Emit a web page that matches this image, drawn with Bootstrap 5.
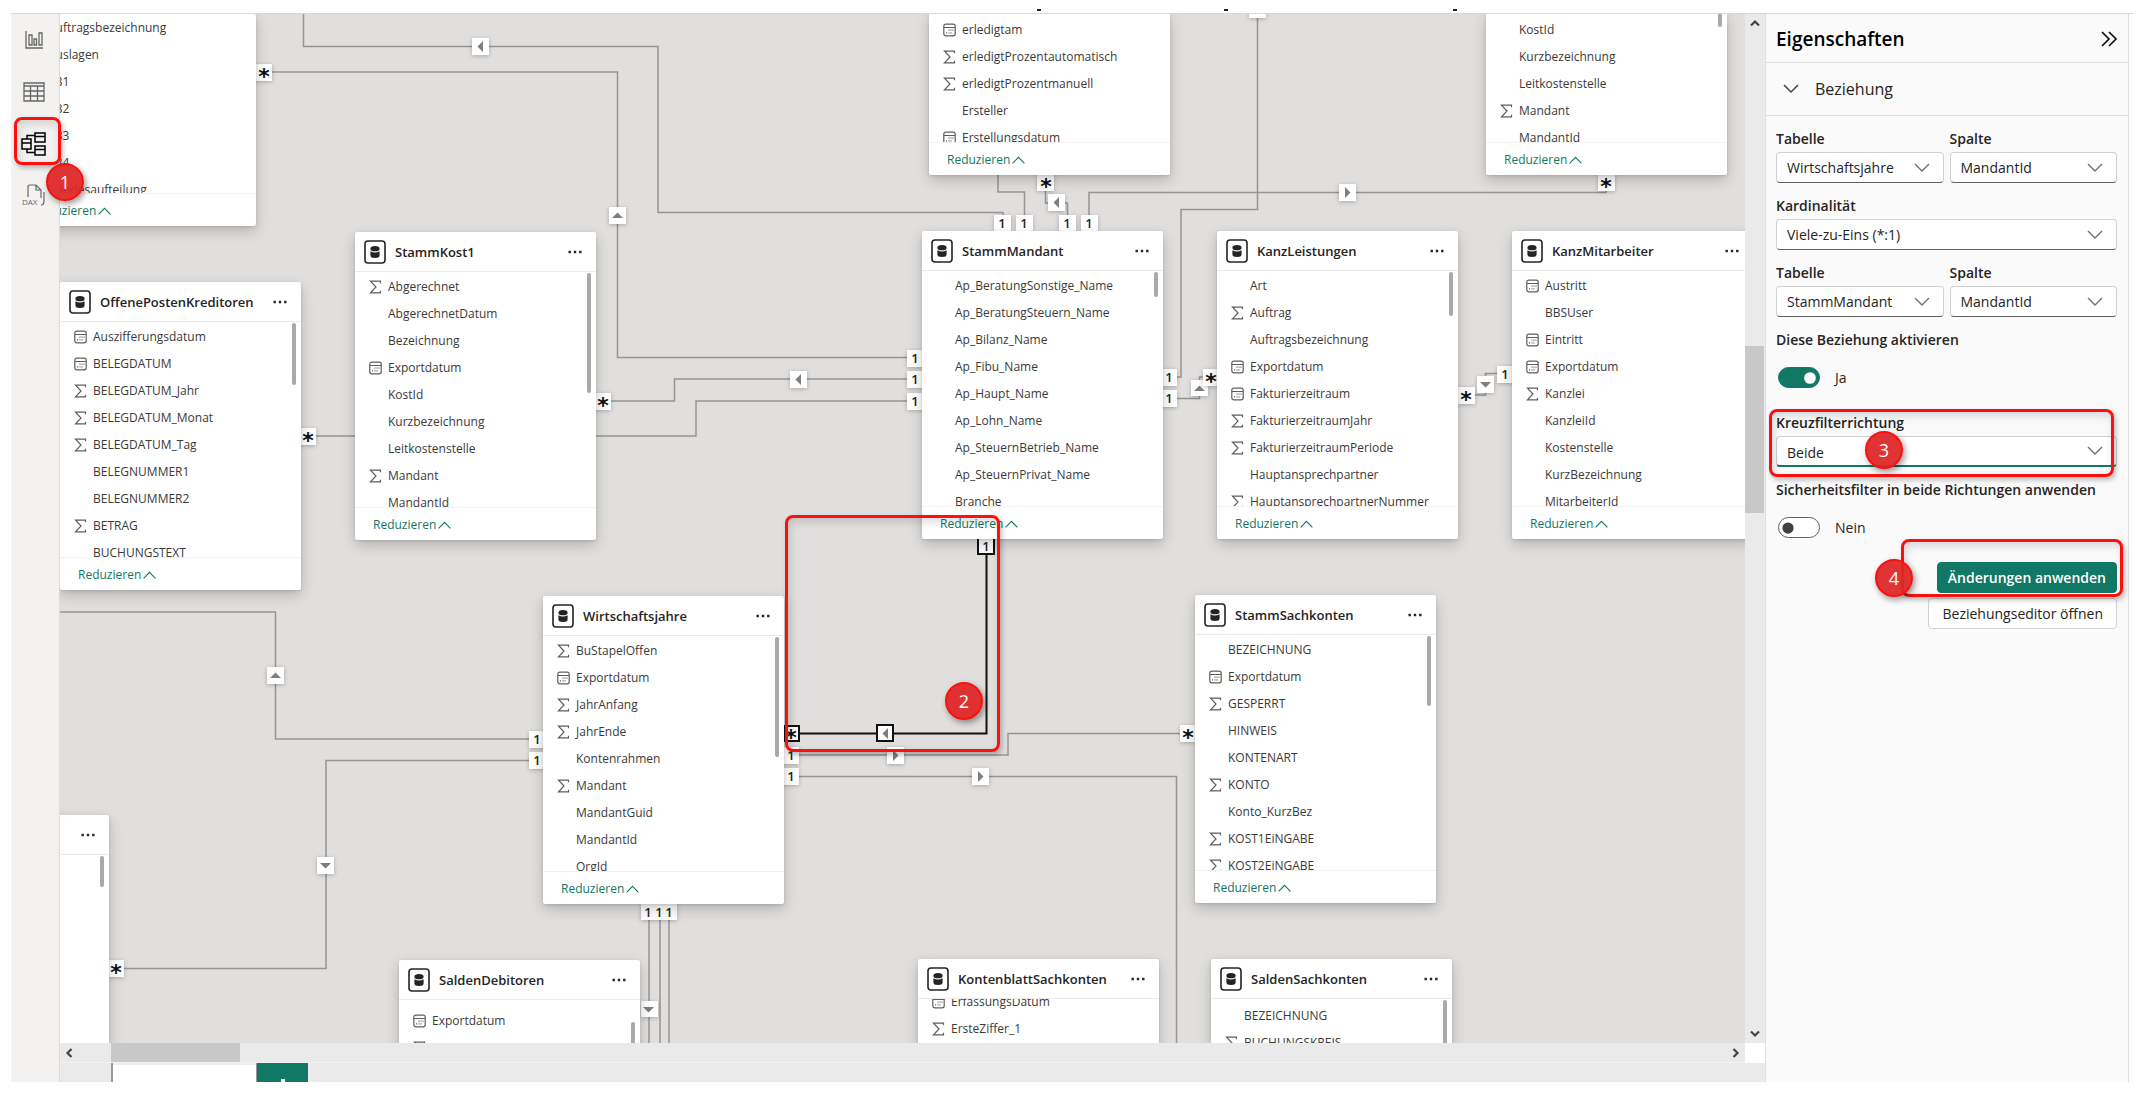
<!DOCTYPE html>
<html lang="de">
<head>
<meta charset="utf-8">
<meta name="viewport" content="width=device-width, initial-scale=1">
<title>Modellansicht</title>
<link href="https://cdn.jsdelivr.net/npm/bootstrap@5.3.0/dist/css/bootstrap.min.css" rel="stylesheet">
<style>
:root{--ink:#252423;--teal:#117865;--line:#e1dfdd;--red:#fb1010}
body{font-family:"Open Sans","Noto Sans",sans-serif;font-size:14px;color:var(--ink);background:#fff}
.app{height:100vh;padding:0 22px 27px 11px}
.topband{height:13px;flex:none;background:#fff}
.main{min-height:0;border-top:1px solid #d8d8d8;box-shadow:inset 0 3px 4px -2px rgba(0,0,0,.18)}
/* view switcher */
.views{width:49px;flex:none;background:#f3f2f1;border-right:1px solid #dcdad8}
.views button{height:52px;width:48px;padding:0 3px 1px 0;border:0;background:none;color:#666;position:relative;display:flex;align-items:center;justify-content:center}
.views button.current{color:#000}
/* canvas */
.canvas{position:relative;overflow:hidden;background:#e0dfdd}
.stage{position:absolute;left:-60px;top:-14px;width:2155px;height:1109px}
.links{position:absolute;left:0;top:0}
.links .wire{fill:none;stroke:#979593;stroke-width:1.5}
.links .pick{fill:none;stroke:#111;stroke-width:2}
.links .chip{fill:#fff;filter:drop-shadow(0 1px 2px rgba(0,0,0,.25))}
.links .chosen{fill:#fff;stroke:#111;stroke-width:2}
.links .tri{fill:#807e7c}
.links text{font-size:13px;font-weight:600;fill:#252423;text-anchor:middle}
.links text.many{font-family:"DejaVu Sans",sans-serif;font-size:22px;font-weight:700;fill:#111}
.node{position:absolute;width:241px;height:308px;background:#fff;border-radius:2px;box-shadow:0 5px 14px rgba(0,0,0,.2),0 1px 3px rgba(0,0,0,.12);display:flex;flex-direction:column}
.node header{height:40px;flex:none;display:flex;align-items:center;padding:0 14px 0 9px;border-bottom:1px solid #edebe9}
.node h2{font-size:13px;font-weight:600;line-height:20px;margin:0 auto 0 9px;white-space:nowrap}
.node .more{border:0;background:none;padding:0;line-height:0;color:var(--ink)}
.node .fields{flex:1;min-height:0;overflow:hidden}
.node ul{list-style:none;margin:0;padding:1px 0 0 14px}
.node li{height:27px;display:flex;align-items:center;font-size:12px;color:#3b3a39;white-space:nowrap}
.node li svg{width:13px;height:14px;margin-right:6px;flex:none;color:#605e5c}
.node li.plain{padding-left:19px}
.node footer{height:33px;flex:none;border-top:1px solid #f3f2f1;padding:1px 0 0 18px;display:flex;align-items:center}
.node footer a{font-size:12px;color:var(--teal);text-decoration:none;display:flex;align-items:center;gap:2px}
.node .thumb{position:absolute;right:5px;top:41px;width:4px;border-radius:2px;background:#a9a9a9}
.node .late{padding-top:7px}
.node .scrolled{margin-top:-12px}
.node .beneath{padding-top:3px}
.node .beneath1{padding-top:0}
/* scroll bars */
.vbar{width:20px;flex:none;background:#eaeaea;position:relative}
.hbar{height:20px;flex:none;background:#eaeaea;position:relative;border-bottom:1px solid #f2f2f2}
.corner{width:20px;height:20px;flex:none}
.knob{position:absolute;background:#c8c8c8}
.vbar .knob{left:0;right:1px;top:332px;height:167px}
.hbar .knob{left:51px;width:129px;top:0;bottom:0}
.tabs{height:19px;flex:none;background:#eaeaea}
.tabs .leaf{width:146px;margin-left:51px;border:1px solid #999;border-width:0 1px 0 2px;background:#fff;box-shadow:inset 0 2px #eee}
.tabs .plus{width:51px;border:0;border-radius:0;padding:0;background:var(--teal);color:#fff;overflow:hidden;line-height:0;display:flex;align-items:flex-end;justify-content:center}
/* properties pane */
.pane{width:364px;flex:none;background:#fafafa;border:1px solid var(--line);border-width:0 1px}
.edge{width:4px;flex:none;background:#fcfcfc}
.pane h1{font-size:19px;font-weight:600;margin:0;color:#000}
.pane .head{height:49px;padding:2px 10px 0;border-bottom:1px solid var(--line)}
.pane .sect{height:53px;padding:0 17px;border:0;border-bottom:1px solid var(--line);background:none;font-size:16px;width:100%;gap:16px;color:var(--ink)}
.pane form{padding:10px 11px 0 10px}
.pane label.cap,.pane .cap{height:26px;line-height:25px;font-size:14px;font-weight:600;display:block;margin:0;white-space:nowrap}
.pane .form-select{height:31px;padding:1px 36px 0 10px;font-size:14px;line-height:28px;color:var(--ink);border:1px solid #d1d1d1;border-bottom-color:#616161;border-radius:4px;background-color:#fff;background-size:16px 10px;background-position:right 13px center;background-image:url("data:image/svg+xml,%3Csvg xmlns='http://www.w3.org/2000/svg' viewBox='0 0 16 10'%3E%3Cpath d='M1 1l7 7 7-7' fill='none' stroke='%23707070' stroke-width='1.4'/%3E%3C/svg%3E")}
.pane .form-select.live{border-bottom:2px solid var(--teal);padding-top:2px}
.pane .grp{margin-bottom:10px;position:relative}
.pane .pair{gap:6px}
.pane .pair>div{flex:1 1 0;min-width:0}
.pane .form-switch{height:49px;padding:0 0 0 2px;margin:0;display:flex;align-items:center;gap:15px}
.pane .form-switch .form-check-input{width:42px;height:21px;margin:0;float:none;border:1px solid #616161;background-color:#fff;background-size:18px;background-image:url("data:image/svg+xml,%3Csvg xmlns='http://www.w3.org/2000/svg' viewBox='-4 -4 8 8'%3E%3Ccircle r='2.5' fill='%23424242'/%3E%3C/svg%3E")}
.pane .form-switch .form-check-input:checked{background-color:var(--teal);border-color:var(--teal);background-image:url("data:image/svg+xml,%3Csvg xmlns='http://www.w3.org/2000/svg' viewBox='-4 -4 8 8'%3E%3Ccircle r='2.6' fill='%23fff'/%3E%3C/svg%3E")}
.pane .btn{height:31px;padding:0 13px;font-size:14px;line-height:28px;border-radius:4px;color:var(--ink);background:#fff;border:1px solid #d1d1d1}
.pane .btn.go{background:var(--teal);border-color:var(--teal);color:#fff;font-weight:600;padding:0 10px}
.acts{position:relative;margin-top:10px;gap:5px}
/* numbered call-outs */
.ring{position:absolute;border:3px solid var(--red);border-radius:8px;box-shadow:2px 3px 5px rgba(0,0,0,.25),inset 2px 4px 8px rgba(0,0,0,.14);pointer-events:none;z-index:3}
.pin{position:absolute;width:38px;height:38px;border-radius:50%;border:2px solid var(--red);background:rgba(222,38,38,.94);color:#fff;font-size:18px;line-height:34px;text-align:center;box-shadow:2px 3px 6px rgba(0,0,0,.4);z-index:4}
.ring1{left:3px;top:-1px;width:47px;height:48px}
.pin1{left:35px;top:45px}
.ring2{left:785px;top:515px;width:215px;height:237px}
.pin2{left:945px;top:682px}
.ring3{left:-7px;right:3px;top:-1px;height:68px}
.pin3{left:89px;top:21px}
.ring4{left:125px;right:-6px;top:-23px;height:58px}
.pin4{left:99px;top:-3px}
</style>
</head>
<body>
<svg width="0" height="0" class="d-none">
  <symbol id="sum" viewBox="0 0 13 14"><path d="M11.5 3.2V1.2H1.5L7 7l-5.500 5.800h10v-2" fill="none" stroke="currentColor" stroke-width="1.200"/></symbol>
  <symbol id="cal" viewBox="0 0 13 14"><rect x=".8" y="1.200" width="11.400" height="11.600" rx="2" fill="none" stroke="currentColor" stroke-width="1.200"/><path d="M1 4.500h11" stroke="currentColor"/><path d="M5.500 7.200h1m1 0h1m1 0h1M3 9.800h1m1.500 0h1m1 0h1" stroke="currentColor" stroke-width="1.300"/></symbol>
  <symbol id="db" viewBox="0 0 22 24"><rect x="1" y="1" width="20" height="22" rx="3" fill="#fff" stroke="#252423" stroke-width="1.600"/><ellipse cx="11" cy="8.700" rx="4.600" ry="2.600" fill="#252423"/><path d="M6.400 11.200q4.600 2.600 9.200 0v4.300q0 2.500-4.600 2.500t-4.600-2.500z" fill="#252423"/></symbol>
  <symbol id="dots" viewBox="0 0 14 4"><path d="M.5.800h2.400v2.400H.5zM5.800.8h2.400v2.400H5.800zM11.100.8h2.400v2.400h-2.400z" fill="currentColor"/></symbol>
  <symbol id="up" viewBox="0 0 13 8"><path d="M.6 7.300l5.900-6 5.900 6" fill="none" stroke="currentColor" stroke-width="1.100"/></symbol>
</svg>
<div class="app d-flex flex-column">
  <div class="topband"><svg class="d-block w-100" height="13"><path d="M1026 10h4m183 0h4m225 0h4" stroke="#222" stroke-width="2"/></svg></div>
  <div class="main d-flex flex-fill">
    <nav class="views d-flex flex-column" aria-label="Ansichten">
      <button type="button" aria-label="Bericht"><svg width="18" height="18" fill="none" stroke="currentColor" stroke-width="1.300"><path d="M1 0v17h17"/><path d="M4 4h3v10H4zM9 8h2.500v6H9zM14 2h3v12h-3z"/></svg></button>
      <button type="button" aria-label="Tabelle"><svg width="22" height="20" fill="none" stroke="currentColor" stroke-width="1.300"><path d="M1 1h20v18H1zM1 4h20M1 9h20M1 14h20M7.500 4v15M14.500 4v15"/></svg></button>
      <button type="button" class="current" aria-label="Modell"><svg width="25" height="24" fill="none" stroke="currentColor" stroke-width="1.500"><path d="M1 7h9v10H1zM1 11h9M14 1h10v9H14zM14 4.500h10M14 14h10v9H14zM14 17.500h10M6 7V3.500h8M6 17v3.500h8"/></svg><span class="ring ring1"></span><span class="pin pin1">1</span></button>
      <button type="button" aria-label="DAX"><svg width="24" height="23" fill="none" stroke="currentColor" stroke-width="1.200"><path d="M6 13V3q0-2 2-2h6l5 5v8M14 1v5h5M22 8v9q0 4-3 4"/><text x="0" y="21" font-size="8" fill="currentColor" stroke="none">DAX</text></svg></button>
    </nav>
    <div class="d-flex flex-column flex-fill">
      <div class="d-flex flex-fill">
        <div class="canvas flex-fill">
          <div class="stage">
            <svg class="links" width="2155" height="1109">
              <g class="wire">
                <path d="M303.500 0V46.500H658V212.500H1003V218"/>
                <path d="M264 72H617.500V357.500H922"/>
                <path d="M603 401H674.500V379H922"/>
                <path d="M308 436H696V401H922"/>
                <path d="M998 170V192H1024.500V218"/>
                <path d="M1045.500 182V203H1067.500V218"/>
                <path d="M1089 218V192.500H1606V182"/>
                <path d="M1257.500 0V209.500H1181V377H1160"/>
                <path d="M1165 398.500H1199.500V377H1211"/>
                <path d="M1466 395H1485.500V373.500H1505"/>
                <path d="M55 612H275.500V739H543"/>
                <path d="M116 968.500H326V760.500H543"/>
                <path d="M785 755H1008V733.500H1188"/>
                <path d="M785 776.500H1176.500V1060"/>
                <path d="M649 900V1060M660 900V1060M669 900V1060"/>
              </g>
              <path class="pick" d="M986.500 540V733.500H784"/>
              <g>
                <path class="chip" d="M472 38h17v17h-17zM609 207h17v17h-17zM790 371h17v17h-17zM1048 194h17v17h-17zM1339 184h17v17h-17zM1191 380h17v16h-17zM1477 376h17v17h-17zM267 667h17v17h-17zM317 857h17v17h-17zM887 747h17v17h-17zM972 768h17v17h-17zM641 1001h17v16h-17z"/>
                <path class="chip" d="M255 64h17v17h-17zM594 393h17v17h-17zM299 428h17v17h-17zM1037 174h17v17h-17zM1598 174h17v17h-17zM1203 369h17v17h-17zM1458 387h17v17h-17zM107 960h17v17h-17zM1180 725h17v17h-17z"/>
                <path class="chip" d="M907 350h17v17h-17zM907 371h17v17h-17zM907 393h17v17h-17zM994 215h17v17h-17zM1016 215h17v17h-17zM1059 215h17v17h-17zM1081 215h17v17h-17zM1160 369h17v17h-17zM1160 390h17v17h-17zM1497 366h17v17h-17zM529 731h17v17h-17zM529 752h17v17h-17zM782 747h17v17h-17zM782 768h17v17h-17zM641 903h36v17h-36zM1249 2h17v16h-17z"/>
                <path class="chosen" d="M978 538h16v16h-16zM784 726h15v15h-15zM877 725h16v16h-16z"/>
                <path class="tri" d="M483 41v11l-5.500-5.500zM801 374v11l-5.500-5.500zM1059 197v11l-5.500-5.500zM888 728v11l-5.500-5.500zM1345 187v11l5.500-5.500zM893 750v11l5.500-5.500zM978 771v11l5.500-5.500zM612 218h11l-5.500-5.500zM1194 391h11l-5.500-5.500zM270 678h11l-5.500-5.500zM1480 382h11l-5.500 5.500zM320 863h11l-5.500 5.500zM643 1007h11l-5.500 5.500z"/>
              </g>
              <text x="915" y="363">1</text><text x="915" y="384">1</text><text x="915" y="406">1</text>
              <text x="1002" y="228">1</text><text x="1024" y="228">1</text><text x="1067" y="228">1</text><text x="1089" y="228">1</text>
              <text x="1169" y="382">1</text><text x="1169" y="403">1</text><text x="1505" y="379">1</text>
              <text x="537" y="744">1</text><text x="537" y="765">1</text><text x="791" y="760">1</text><text x="791" y="781">1</text>
              <text x="648" y="917">1</text><text x="659" y="917">1</text><text x="669" y="917">1</text><text x="986" y="551">1</text>
              <g>
                <text class="many" x="264" y="84">*</text><text class="many" x="603" y="413">*</text><text class="many" x="308" y="448">*</text>
                <text class="many" x="1046" y="194">*</text><text class="many" x="1606" y="194">*</text><text class="many" x="1211" y="389">*</text>
                <text class="many" x="1466" y="407">*</text><text class="many" x="116" y="980">*</text><text class="many" x="1188" y="745">*</text><text class="many" x="791" y="745">*</text>
              </g>
            </svg>

            <section class="node" style="left:15px;top:14px;height:212px">
              <div class="fields"><ul class="beneath1">
                <li class="plain">Auftragsbezeichnung</li><li class="plain">Auslagen</li><li class="plain">EB1</li><li class="plain">EB2</li><li class="plain">EB3</li><li class="plain">EB4</li><li class="plain">Bundesaufteilung</li>
              </ul></div>
              <footer><a href="#">Reduzieren <svg width="13" height="8"><use href="#up"/></svg></a></footer>
            </section>

            <section class="node" style="left:929px;top:13px;height:162px">
              <div class="fields"><ul class="beneath">
                <li><svg><use href="#cal"/></svg>erledigtam</li><li><svg><use href="#sum"/></svg>erledigtProzentautomatisch</li><li><svg><use href="#sum"/></svg>erledigtProzentmanuell</li><li class="plain">Ersteller</li><li><svg><use href="#cal"/></svg>Erstellungsdatum</li>
              </ul></div>
              <footer><a href="#">Reduzieren <svg width="13" height="8"><use href="#up"/></svg></a></footer>
            </section>

            <section class="node" style="left:1486px;top:13px;height:162px">
              <div class="fields"><ul class="beneath">
                <li class="plain">KostId</li><li class="plain">Kurzbezeichnung</li><li class="plain">Leitkostenstelle</li><li><svg><use href="#sum"/></svg>Mandant</li><li class="plain">MandantId</li>
              </ul></div>
              <footer><a href="#">Reduzieren <svg width="13" height="8"><use href="#up"/></svg></a></footer>
              <span class="thumb" style="top:0;height:14px"></span>
            </section>

            <section class="node" style="left:355px;top:232px">
              <header><svg width="22" height="24"><use href="#db"/></svg><h2>StammKost1</h2><button class="more" type="button" aria-label="Mehr"><svg width="14" height="4"><use href="#dots"/></svg></button></header>
              <div class="fields"><ul>
                <li><svg><use href="#sum"/></svg>Abgerechnet</li><li class="plain">AbgerechnetDatum</li><li class="plain">Bezeichnung</li><li><svg><use href="#cal"/></svg>Exportdatum</li><li class="plain">KostId</li><li class="plain">Kurzbezeichnung</li><li class="plain">Leitkostenstelle</li><li><svg><use href="#sum"/></svg>Mandant</li><li class="plain">MandantId</li>
              </ul></div>
              <footer><a href="#">Reduzieren <svg width="13" height="8"><use href="#up"/></svg></a></footer>
              <span class="thumb" style="height:120px"></span>
            </section>

            <section class="node" style="left:60px;top:282px">
              <header><svg width="22" height="24"><use href="#db"/></svg><h2>OffenePostenKreditoren</h2><button class="more" type="button" aria-label="Mehr"><svg width="14" height="4"><use href="#dots"/></svg></button></header>
              <div class="fields"><ul>
                <li><svg><use href="#cal"/></svg>Auszifferungsdatum</li><li><svg><use href="#cal"/></svg>BELEGDATUM</li><li><svg><use href="#sum"/></svg>BELEGDATUM_Jahr</li><li><svg><use href="#sum"/></svg>BELEGDATUM_Monat</li><li><svg><use href="#sum"/></svg>BELEGDATUM_Tag</li><li class="plain">BELEGNUMMER1</li><li class="plain">BELEGNUMMER2</li><li><svg><use href="#sum"/></svg>BETRAG</li><li class="plain">BUCHUNGSTEXT</li>
              </ul></div>
              <footer><a href="#">Reduzieren <svg width="13" height="8"><use href="#up"/></svg></a></footer>
              <span class="thumb" style="height:62px"></span>
            </section>

            <section class="node" style="left:922px;top:231px">
              <header><svg width="22" height="24"><use href="#db"/></svg><h2>StammMandant</h2><button class="more" type="button" aria-label="Mehr"><svg width="14" height="4"><use href="#dots"/></svg></button></header>
              <div class="fields"><ul>
                <li class="plain">Ap_BeratungSonstige_Name</li><li class="plain">Ap_BeratungSteuern_Name</li><li class="plain">Ap_Bilanz_Name</li><li class="plain">Ap_Fibu_Name</li><li class="plain">Ap_Haupt_Name</li><li class="plain">Ap_Lohn_Name</li><li class="plain">Ap_SteuernBetrieb_Name</li><li class="plain">Ap_SteuernPrivat_Name</li><li class="plain">Branche</li>
              </ul></div>
              <footer><a href="#">Reduzieren <svg width="13" height="8"><use href="#up"/></svg></a></footer>
              <span class="thumb" style="height:25px"></span>
            </section>

            <section class="node" style="left:1217px;top:231px">
              <header><svg width="22" height="24"><use href="#db"/></svg><h2>KanzLeistungen</h2><button class="more" type="button" aria-label="Mehr"><svg width="14" height="4"><use href="#dots"/></svg></button></header>
              <div class="fields"><ul>
                <li class="plain">Art</li><li><svg><use href="#sum"/></svg>Auftrag</li><li class="plain">Auftragsbezeichnung</li><li><svg><use href="#cal"/></svg>Exportdatum</li><li><svg><use href="#cal"/></svg>Fakturierzeitraum</li><li><svg><use href="#sum"/></svg>FakturierzeitraumJahr</li><li><svg><use href="#sum"/></svg>FakturierzeitraumPeriode</li><li class="plain">Hauptansprechpartner</li><li><svg><use href="#sum"/></svg>HauptansprechpartnerNummer</li>
              </ul></div>
              <footer><a href="#">Reduzieren <svg width="13" height="8"><use href="#up"/></svg></a></footer>
              <span class="thumb" style="height:44px"></span>
            </section>

            <section class="node" style="left:1512px;top:231px">
              <header><svg width="22" height="24"><use href="#db"/></svg><h2>KanzMitarbeiter</h2><button class="more" type="button" aria-label="Mehr"><svg width="14" height="4"><use href="#dots"/></svg></button></header>
              <div class="fields"><ul>
                <li><svg><use href="#cal"/></svg>Austritt</li><li class="plain">BBSUser</li><li><svg><use href="#cal"/></svg>Eintritt</li><li><svg><use href="#cal"/></svg>Exportdatum</li><li><svg><use href="#sum"/></svg>Kanzlei</li><li class="plain">KanzleiId</li><li class="plain">Kostenstelle</li><li class="plain">KurzBezeichnung</li><li class="plain">MitarbeiterId</li>
              </ul></div>
              <footer><a href="#">Reduzieren <svg width="13" height="8"><use href="#up"/></svg></a></footer>
            </section>

            <section class="node" style="left:543px;top:596px">
              <header><svg width="22" height="24"><use href="#db"/></svg><h2>Wirtschaftsjahre</h2><button class="more" type="button" aria-label="Mehr"><svg width="14" height="4"><use href="#dots"/></svg></button></header>
              <div class="fields"><ul>
                <li><svg><use href="#sum"/></svg>BuStapelOffen</li><li><svg><use href="#cal"/></svg>Exportdatum</li><li><svg><use href="#sum"/></svg>JahrAnfang</li><li><svg><use href="#sum"/></svg>JahrEnde</li><li class="plain">Kontenrahmen</li><li><svg><use href="#sum"/></svg>Mandant</li><li class="plain">MandantGuid</li><li class="plain">MandantId</li><li class="plain">OrgId</li>
              </ul></div>
              <footer><a href="#">Reduzieren <svg width="13" height="8"><use href="#up"/></svg></a></footer>
              <span class="thumb" style="height:120px"></span>
            </section>

            <section class="node" style="left:1195px;top:595px">
              <header><svg width="22" height="24"><use href="#db"/></svg><h2>StammSachkonten</h2><button class="more" type="button" aria-label="Mehr"><svg width="14" height="4"><use href="#dots"/></svg></button></header>
              <div class="fields"><ul>
                <li class="plain">BEZEICHNUNG</li><li><svg><use href="#cal"/></svg>Exportdatum</li><li><svg><use href="#sum"/></svg>GESPERRT</li><li class="plain">HINWEIS</li><li class="plain">KONTENART</li><li><svg><use href="#sum"/></svg>KONTO</li><li class="plain">Konto_KurzBez</li><li><svg><use href="#sum"/></svg>KOST1EiNGABE</li><li><svg><use href="#sum"/></svg>KOST2EiNGABE</li>
              </ul></div>
              <footer><a href="#">Reduzieren <svg width="13" height="8"><use href="#up"/></svg></a></footer>
              <span class="thumb" style="height:70px"></span>
            </section>

            <section class="node" style="left:-132px;top:815px">
              <header class="justify-content-end"><button class="more" type="button" aria-label="Mehr"><svg width="14" height="4"><use href="#dots"/></svg></button></header>
              <span class="thumb" style="height:31px"></span>
            </section>

            <section class="node" style="left:399px;top:960px">
              <header><svg width="22" height="24"><use href="#db"/></svg><h2>SaldenDebitoren</h2><button class="more" type="button" aria-label="Mehr"><svg width="14" height="4"><use href="#dots"/></svg></button></header>
              <div class="fields"><ul class="late"><li><svg><use href="#cal"/></svg>Exportdatum</li><li><svg><use href="#sum"/></svg></li></ul></div>
              <span class="thumb" style="top:62px;height:90px"></span>
            </section>

            <section class="node" style="left:918px;top:959px">
              <header><svg width="22" height="24"><use href="#db"/></svg><h2>KontenblattSachkonten</h2><button class="more" type="button" aria-label="Mehr"><svg width="14" height="4"><use href="#dots"/></svg></button></header>
              <div class="fields"><ul class="scrolled"><li><svg><use href="#cal"/></svg>ErfassungsDatum</li><li><svg><use href="#sum"/></svg>ErsteZiffer_1</li></ul></div>
            </section>

            <section class="node" style="left:1211px;top:959px">
              <header><svg width="22" height="24"><use href="#db"/></svg><h2>SaldenSachkonten</h2><button class="more" type="button" aria-label="Mehr"><svg width="14" height="4"><use href="#dots"/></svg></button></header>
              <div class="fields"><ul class="beneath"><li class="plain">BEZEICHNUNG</li><li><svg><use href="#sum"/></svg>BUCHUNGSKREIS</li></ul></div>
              <span class="thumb" style="height:90px"></span>
            </section>

            <span class="ring ring2"></span><span class="pin pin2">2</span>
          </div>
        </div>
        <div class="vbar d-flex flex-column align-items-center justify-content-between py-1">
          <svg width="12" height="10"><path d="M2 7.500l4-4 4 4" fill="none" stroke="#444" stroke-width="2.200"/></svg>
          <span class="knob"></span>
          <svg width="12" height="10"><path d="M2 2.500l4 4 4-4" fill="none" stroke="#444" stroke-width="2.200"/></svg>
        </div>
      </div>
      <div class="d-flex">
        <div class="hbar flex-fill d-flex align-items-center justify-content-between px-1">
          <svg width="10" height="12"><path d="M7.500 2l-4 4 4 4" fill="none" stroke="#444" stroke-width="2.200"/></svg>
          <span class="knob"></span>
          <svg width="10" height="12"><path d="M2.500 2l4 4-4 4" fill="none" stroke="#444" stroke-width="2.200"/></svg>
        </div>
        <div class="corner"></div>
      </div>
      <div class="tabs d-flex"><div class="leaf"></div><button type="button" class="plus" aria-label="Neue Seite"><svg width="4" height="3"><path d="M0 0h4v3H0z" fill="#fff"/></svg></button></div>
    </div>
    <aside class="pane">
      <div class="head d-flex align-items-center justify-content-between">
        <h1>Eigenschaften</h1>
        <svg width="18" height="16" fill="none" stroke="#111" stroke-width="1.700"><path d="M2 1l7 7-7 7M9 1l7 7-7 7"/></svg>
      </div>
      <button type="button" class="sect d-flex align-items-center"><svg width="16" height="10" fill="none" stroke="#444" stroke-width="1.500"><path d="M1 1l7 7 7-7"/></svg>Beziehung</button>
      <form>
        <div class="grp pair d-flex">
          <div><label class="cap" for="t1">Tabelle</label><select class="form-select" id="t1"><option>Wirtschaftsjahre</option></select></div>
          <div><label class="cap" for="s1">Spalte</label><select class="form-select" id="s1"><option>MandantId</option></select></div>
        </div>
        <div class="grp"><label class="cap" for="k">Kardinalität</label><select class="form-select" id="k"><option>Viele-zu-Eins (*:1)</option></select></div>
        <div class="grp pair d-flex">
          <div><label class="cap" for="t2">Tabelle</label><select class="form-select" id="t2"><option>StammMandant</option></select></div>
          <div><label class="cap" for="s2">Spalte</label><select class="form-select" id="s2"><option>MandantId</option></select></div>
        </div>
        <span class="cap">Diese Beziehung aktivieren</span>
        <div class="form-check form-switch"><input class="form-check-input" type="checkbox" role="switch" id="on" checked><label for="on">Ja</label></div>
        <div class="grp mt-2"><label class="cap" for="x">Kreuzfilterrichtung</label><select class="form-select live" id="x"><option>Beide</option></select><span class="ring ring3"></span><span class="pin pin3">3</span></div>
        <span class="cap">Sicherheitsfilter in beide Richtungen anwenden</span>
        <div class="form-check form-switch"><input class="form-check-input" type="checkbox" role="switch" id="sec"><label for="sec">Nein</label></div>
        <div class="acts d-flex flex-column align-items-end">
          <button type="button" class="btn go">Änderungen anwenden</button>
          <button type="button" class="btn">Beziehungseditor öffnen</button>
          <span class="ring ring4"></span><span class="pin pin4">4</span>
        </div>
      </form>
    </aside>
    <div class="edge"></div>
  </div>
</div>
<script src="https://cdn.jsdelivr.net/npm/bootstrap@5.3.0/dist/js/bootstrap.bundle.min.js"></script>
</body>
</html>
